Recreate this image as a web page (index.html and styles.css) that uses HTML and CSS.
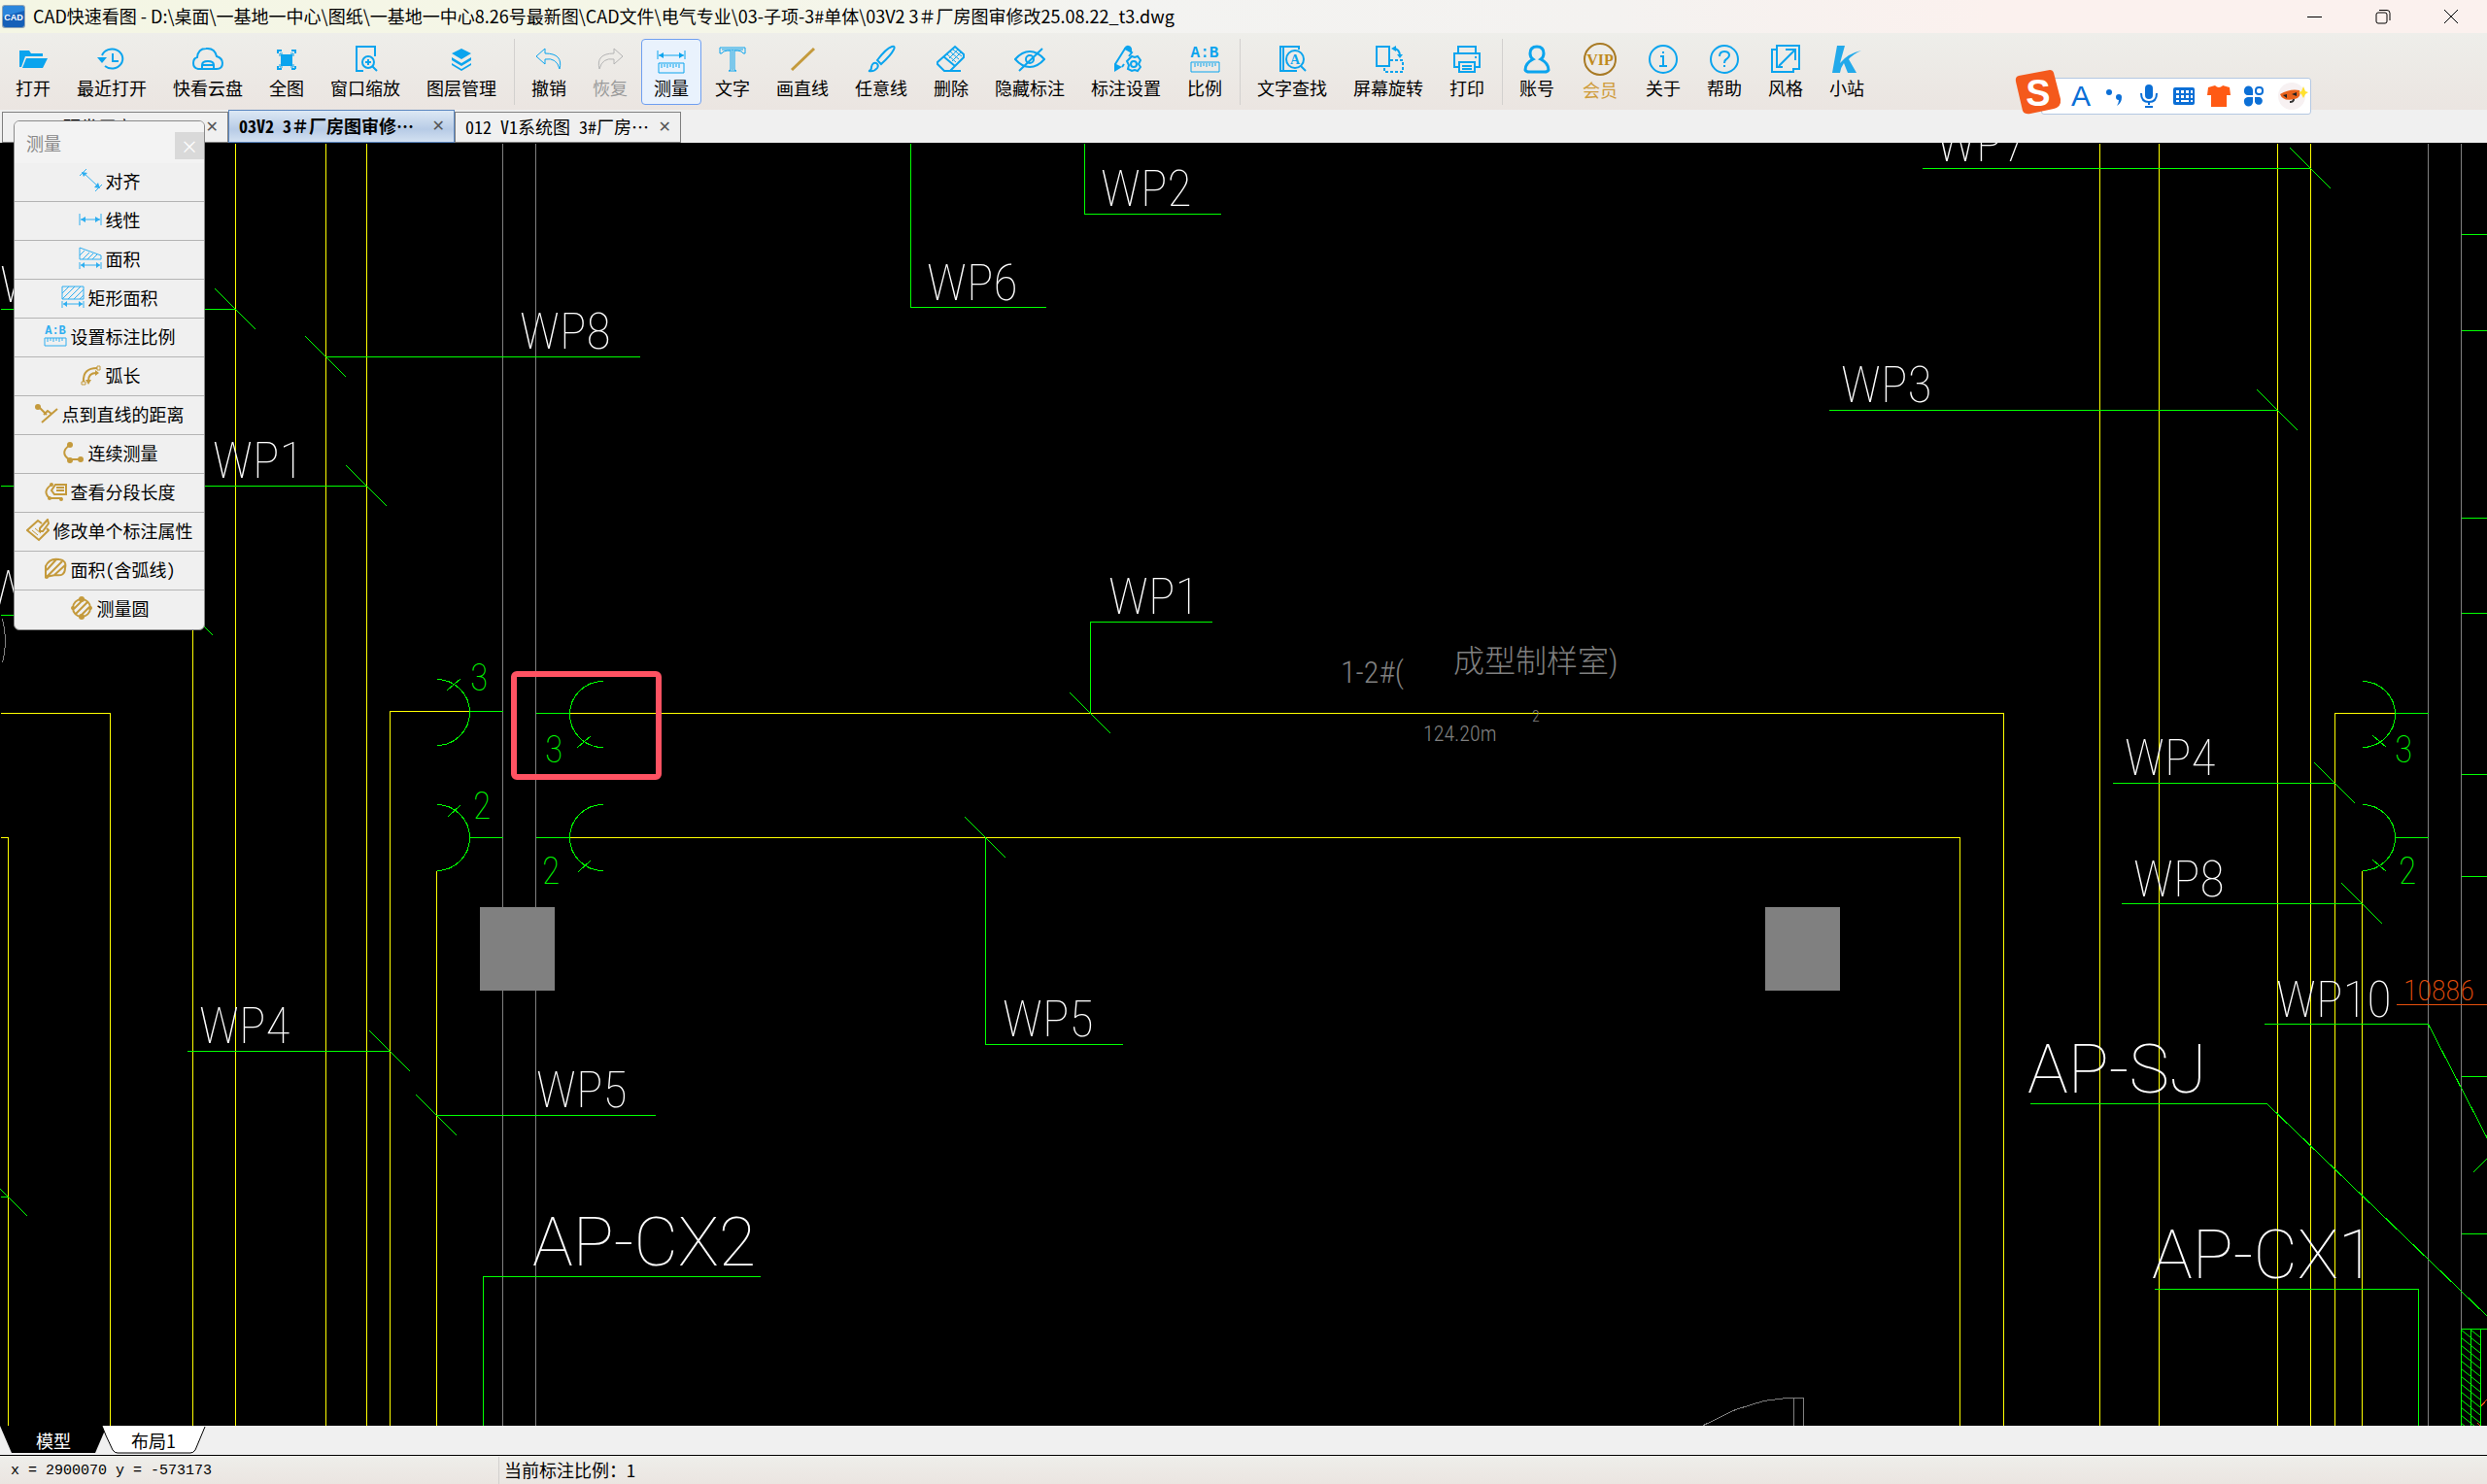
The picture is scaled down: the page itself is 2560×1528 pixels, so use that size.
FILE: index.html
```html
<!DOCTYPE html>
<html lang="zh-CN">
<head>
    <meta charset="UTF-8">
    <meta name="viewport" content="width=device-width, initial-scale=1.0">
    <title>CAD快速看图</title>
    <link rel="stylesheet" href="styles.css">
</head>
<body>
    <header class="titlebar">
        <svg class="app-icon" viewBox="0 0 24 24">
            <rect x="0" y="0" width="24" height="24" rx="3" fill="#8fa3b5"/>
            <rect x="1" y="1" width="22" height="22" rx="3" fill="#1560b8"/>
            <path d="M1 12 L23 6 V4 Q23 1 20 1 H4 Q1 1 1 4Z" fill="#2b86dc"/>
            <text x="12" y="16" class="app-icon-text">CAD</text>
        </svg>
        <h1>CAD快速看图 - D:\桌面\一基地一中心\图纸\一基地一中心8.26号最新图\CAD文件\电气专业\03-子项-3#单体\03V2 3＃厂房图审修改25.08.22_t3.dwg</h1>
        <div class="window-buttons">
            <button aria-label="最小化"><svg viewBox="0 0 16 16"><path d="M0 8.500H15"/></svg></button>
            <button aria-label="还原"><svg viewBox="0 0 16 16"><rect x="1" y="4" width="11" height="11" rx="2"/><path d="M4 1.500H12Q15 1.500 15 4.500V12"/></svg></button>
            <button aria-label="关闭"><svg viewBox="0 0 16 16"><path d="M1 1L15 15M15 1L1 15"/></svg></button>
        </div>
    </header>

    <nav class="toolbar">
        <button><svg viewBox="0 0 32 32"><path class="solid" d="M2 7H12L14 10H26V13H8L4 24H2ZM9 15H31L26 25H5Z"/></svg>打开</button>
        <button><svg viewBox="0 0 32 32"><path class="w2" d="M6 12A11 10 0 1 1 9 23M17 10V18H23"/><path class="solid" d="M1 14H11L6 20Z"/></svg>最近打开</button>
        <button><svg viewBox="0 0 32 32"><path class="w2" d="M10 26H6Q1 25 1 20Q1 15 5 14Q6 5 14 5Q23 4 25 13Q31 15 31 20Q31 26 25 26H22M10 26V22Q10 18 16 18Q22 18 22 22V26ZM10 22H22"/></svg>快看云盘</button>
        <button><svg viewBox="0 0 32 32"><rect class="solid" x="10" y="11" width="12" height="12"/><path d="M9 13V10H12M20 10H23V13M23 21V24H20M12 24H9V21"/><path class="w2" d="M7 10V7H11M21 7H25V10M25 23V26M7 23V26H11M21 26H25"/></svg>全图</button>
        <button><svg viewBox="0 0 32 32"><path class="w2" d="M14 28H7V3H26V13"/><circle class="w2" cx="19" cy="19" r="6"/><path class="w2" d="M23 23L28 28M16 19H22M19 16V22"/></svg>窗口缩放</button>
        <button><svg viewBox="0 0 32 32"><path class="solid" d="M16 5L26 10L16 16L6 10ZM6 14L16 20L26 14V17L16 23L6 17ZM6 20L16 26L26 20V22L16 28L6 22Z"/></svg>图层管理</button>
        <hr>
        <button><svg viewBox="0 0 32 32"><path d="M12 5L3 13L12 21V16Q24 14 27 26Q31 10 12 10Z"/></svg>撤销</button>
        <button class="disabled" disabled><svg viewBox="0 0 32 32"><path d="M20 5L29 13L20 21V16Q8 14 5 26Q1 10 20 10Z"/></svg>恢复</button>
        <button class="active"><svg viewBox="0 0 32 32"><path d="M2 7V16M30 7V16M3 12H29M3 20H29V30H3ZM6 21V25M9 21V24M12 21V25M15 21V24M18 21V25M21 21V24M24 21V25"/><path class="solid" d="M3 12L8 9V15ZM29 12L24 9V15Z"/></svg>测量</button>
        <button><svg viewBox="0 0 32 32"><path d="M3 4H29V10H27Q26 7 18 7V26Q18 28 20 28H12Q14 28 14 26V7Q6 7 5 10H3ZM5 6H27M16 6V27"/></svg>文字</button>
        <button><svg viewBox="0 0 32 32"><path class="gold-line" d="M5 27L28 5"/></svg>画直线</button>
        <button><svg viewBox="0 0 32 32"><path class="w2" d="M12 17Q21 5 27 3Q31 2 29 6Q26 12 16 21ZM3 28Q6 28 6 24Q7 19 11 20Q14 22 12 25Q9 29 3 28Z"/></svg>任意线</button>
        <button><svg viewBox="0 0 32 32"><path class="w2" d="M20 3L29 11V14L15 28H9L2 21V19ZM8 13L20 23M15 28H26"/><path d="M12 11L21 19M15 8L24 16M18 6L27 13M23 6L14 15M26 9L17 18"/></svg>删除</button>
        <button><svg viewBox="0 0 32 32"><path class="w2" d="M1 16Q8 8 16 8Q24 8 31 16Q24 24 16 24Q8 24 1 16ZM29 5L5 28"/><circle class="w2" cx="16" cy="16" r="4"/></svg>隐藏标注</button>
        <button><svg viewBox="0 0 32 32"><path class="w2" d="M5 21L15 5L22 9L19 13M12 24L14 21"/><path class="solid" d="M4 20L12 24L4 29ZM14 5Q16 1 19 2Q23 3 22 9Z"/><path class="w2" d="M22 13L25 14L28 13L31 17L29 21L31 24L28 28L25 27L22 28L18 26L19 22L17 18Z"/><circle class="w2" cx="24" cy="21" r="3"/></svg>标注设置</button>
        <button><svg viewBox="0 0 32 32"><text x="16" y="14" class="ab">A:B</text><path d="M2 19H31V29H2ZM6 20V24M9 20V23M12 20V24M15 20V23M18 20V24M21 20V23M24 20V24M27 20V23"/></svg>比例</button>
        <hr>
        <button><svg viewBox="0 0 32 32"><path class="w2" d="M23 6V3H4V28H21M7 3V28"/><circle class="w2" cx="19" cy="16" r="9"/><path class="w2" d="M25 23L30 28"/><text x="19" y="21" class="find-a">A</text></svg>文字查找</button>
        <button><svg viewBox="0 0 32 32"><path class="w2" d="M4 3H17V23H4Z"/><path class="w2 dash" d="M18 17H31V29H12V24"/><path class="w2" d="M21 5Q28 5 28 13"/><path class="solid" d="M24 2V8L19 5ZM25 11H31L28 15Z"/></svg>屏幕旋转</button>
        <button><svg viewBox="0 0 32 32"><path class="w2" d="M7 10V3H25V10M7 24H3V10H29V24H25M8 19H24V29H8ZM11 23H21M11 26H21"/><path class="w2" d="M24 14H26"/></svg>打印</button>
        <hr>
        <button><svg viewBox="0 0 32 32"><path class="w3" d="M16 3Q23 3 23 10Q23 14 20 16Q28 20 28 27Q27 29 24 29H8Q5 29 4 27Q4 20 12 16Q9 14 9 10Q9 3 16 3Z"/></svg>账号</button>
        <button class="vip"><svg viewBox="0 0 36 36"><circle cx="18" cy="18" r="16"/><text x="18" y="24">VIP</text></svg>会员</button>
        <button><svg viewBox="0 0 32 32"><circle class="w2" cx="16" cy="16" r="14"/><path class="w2" d="M13 13H16V23M12 23H20M15 9H17"/></svg>关于</button>
        <button><svg viewBox="0 0 32 32"><circle class="w2" cx="16" cy="16" r="14"/><path class="w2" d="M11 13Q11 8 16 8Q21 8 21 12Q21 14 18 16Q16 17 16 20M16 22V24"/></svg>帮助</button>
        <button><svg viewBox="0 0 32 32"><path class="w2" d="M7 8V2H30V26H24M24 25V29H2V6H7V24H13M9 23L25 7M16 6H26V17"/></svg>风格</button>
        <button><svg viewBox="0 0 32 32"><path class="k-logo" d="M6 2H14L9 20Q17 10 31 7Q22 11 18 16L26 30H17L13 20Q10 24 9 30H1Z"/></svg>小站</button>
    </nav>

    <div class="file-tabs">
        <div class="file-tab"><span class="first-name">3#研发厂房 02…</span><button aria-label="关闭">✕</button></div>
        <div class="file-tab current"><span>03V2 3＃厂房图审修…</span><button aria-label="关闭">✕</button></div>
        <div class="file-tab"><span>012 V1系统图 3#厂房…</span><button aria-label="关闭">✕</button></div>
    </div>

    <main class="drawing">
        <svg viewBox="0 147 2560 1321" preserveAspectRatio="xMinYMin slice">
            <defs>
                <pattern id="hatch" width="10" height="8" patternUnits="userSpaceOnUse" x="2533" y="1369">
                    <path d="M0 0L10 8" stroke="#00ff00" fill="none"/>
                </pattern>
            </defs>
            <g class="lines" transform="translate(.5 .5)">
                <!-- walls -->
                <path class="gray" d="M517 147V1468M551 147V1468M2499 147V1468M2533 147V1468"/>
                <path class="gray" d="M1753 1467L1786 1451L1815 1442L1839 1439H1856V1468M1846 1439V1468M2 637Q8 660 2 682"/>
                <!-- cables -->
                <path class="yellow" d="M198 147V1468M242 147V1468M335 147V1468M377 147V1468M0 734H113V1468M0 862H8V1468"/>
                <path class="yellow" d="M483 732H401V1468M449 896V1468M585 734H2062V1468M585 862H2017V1468"/>
                <path class="yellow" d="M2161 147V1468M2222 147V1468M2344 147V1468M2378 147V1468M2465 734H2403V1468M2431 896V1468"/>
                <!-- leaders -->
                <path class="green" d="M0 318H242M221 297L263 339M335 367H658M314 346L356 388M0 500H377M356 479L398 521M0 633H198M177 612L219 654"/>
                <path class="green" d="M192 1082H401M380 1061L422 1103M449 1148H674M428 1127L470 1169M0 1232H8M0 1224L28 1252M782 1314H497V1468"/>
                <path class="green" d="M937 147V316H1076M1116 147V220H1256M1247 640H1122V734M1101 713L1143 755M1014 862V1075H1155M993 841L1035 883"/>
                <path class="green" d="M1978 173H2378M2357 152L2399 194M1882 422H2344M2323 401L2365 443M2174 806H2403M2382 785L2424 827M2183 930H2431M2410 909L2452 951"/>
                <path class="green" d="M2330 1054H2499L2560 1172M2089 1136H2333L2560 1355M2217 1327H2489V1468M2545 1207L2560 1192"/>
                <path class="green" d="M2533 241H2560M2533 340H2560M2533 533H2560M2533 631H2560M2533 797H2560M2533 902H2560M2533 1108H2560M2533 1270H2560"/>
                <!-- sockets -->
                <path class="green" d="M449 699A34 34 0 0 1 449 767M483 732H517M460 710L474 698M449 828A34 34 0 0 1 449 896M483 862H517M461 840L474 828"/>
                <path class="green" d="M620 701A34 34 0 0 0 620 769M551 734H585M594 769L608 757M620 828A34 34 0 0 0 620 896M551 862H585M595 897L608 885"/>
                <path class="green" d="M2431 701A34 34 0 0 1 2431 769M2465 734H2499M2442 757L2456 769M2431 828A34 34 0 0 1 2431 896M2465 862H2499M2442 885L2456 897"/>
                <path class="orange" d="M2466 1034H2560M2552 1449L2560 1440M2550 1465L2553 1468"/>
                <path class="green" d="M2533 1368H2560M2533 1368V1468M2543 1368V1468M2553 1368V1468"/>
            </g>
            <rect x="2533" y="1369" width="20" height="99" fill="url(#hatch)"/>
            <rect class="column" x="494" y="934" width="77" height="86"/>
            <rect class="column" x="1817" y="934" width="77" height="86"/>

            <g class="mark">
                <text x="1133" y="212">WP2</text>
                <text x="954" y="309">WP6</text>
                <text x="535" y="359">WP8</text>
                <text x="219" y="492">WP1</text>
                <text x="1141" y="632">WP1</text>
                <text x="1993" y="166">WP7</text>
                <text x="1895" y="414">WP3</text>
                <text x="2187" y="798">WP4</text>
                <text x="2196" y="923">WP8</text>
                <text x="2343" y="1047">WP10</text>
                <text x="205" y="1074">WP4</text>
                <text x="552" y="1140">WP5</text>
                <text x="1032" y="1067">WP5</text>
                <text x="0" y="311">WP4</text>
                <text x="-12" y="624">WP5</text>
            </g>
            <g class="panel-name">
                <text x="548" y="1303">AP-CX2</text>
                <text x="2087" y="1125">AP-SJ</text>
                <text x="2215" y="1316">AP-CX1</text>
            </g>
            <g class="wires">
                <text x="484" y="711">3</text>
                <text x="487" y="843">2</text>
                <text x="561" y="785">3</text>
                <text x="558" y="910">2</text>
                <text x="2465" y="785">3</text>
                <text x="2469" y="910">2</text>
            </g>
            <g class="room">
                <text x="1380" y="703">1-2#(</text>
                <text x="1496" y="692">成型制样室)</text>
                <text class="room-area" x="1465" y="763">124.20m</text>
                <text class="room-power" x="1577" y="743">2</text>
            </g>
            <text class="dimension" x="2474" y="1030">10886</text>
            <rect class="highlight" x="529" y="694" width="149" height="106" rx="3"/>
        </svg>
    </main>

    <footer>
        <div class="sheet-tabs">
            <button class="model"><svg viewBox="0 0 110 30"><path d="M0 0H110L98 28H12Z"/></svg><span>模型</span></button>
            <button class="layout"><svg viewBox="0 0 108 30"><path d="M1 0L5 10L12 25Q14 28 17 28H92Q95 28 97 25L107 1"/></svg><span>布局1</span></button>
        </div>
        <div class="statusbar">
            <span class="coords">x = 2900070 y = -573173</span>
            <span class="scale">当前标注比例：1</span>
        </div>
    </footer>

    <aside class="measure">
        <div class="measure-title"><span>测量</span><button aria-label="关闭">×</button></div>
        <button><svg viewBox="0 0 24 24"><path d="M1 7L8 0M17 23L24 16M5 4L20 18"/><path class="solid" d="M3 3L9 4L5 8ZM22 20L16 19L20 14Z"/></svg>对齐</button>
        <button><svg viewBox="0 0 24 24"><path d="M1 6V18M23 6V18M2 12H22"/><path class="solid" d="M2 12L7 9V15ZM22 12L17 9V15Z"/></svg>线性</button>
        <button><svg viewBox="0 0 24 24"><path d="M1 1L23 9V13H1ZM1 9L6 4M4 13L11 6M9 13L15 7M14 13L19 8M1 16V23M23 16V23M2 19H22"/><path class="solid" d="M2 19L6 16V22ZM22 19L18 16V22Z"/></svg>面积</button>
        <button><svg viewBox="0 0 24 24"><path d="M1 1H23V14H1ZM1 8L8 1M1 14L14 1M7 14L20 1M13 14L23 4M19 14L23 10M1 16V23M23 16V23M2 19H22"/><path class="solid" d="M2 19L6 16V22ZM22 19L18 16V22Z"/></svg>矩形面积</button>
        <button><svg viewBox="0 0 24 24"><text x="12" y="10" class="ab-small">A:B</text><path d="M1 14H23V22H1ZM4 14V18M7 14V17M10 14V18M13 14V17M16 14V18M19 14V17"/></svg>设置标注比例</button>
        <button class="gold"><svg viewBox="0 0 24 24"><path class="w2" d="M5 19Q4 5 19 5M10 18Q10 10 18 10"/><path d="M3 19H7V22H3ZM19 3H22V7H19Z"/><path class="solid" d="M7 17H13L10 22ZM17 7V13L21 10Z"/></svg>弧长</button>
        <button class="gold"><svg viewBox="0 0 24 24"><path class="w2" d="M4 5L12 13M7 21L23 7M9 13L13 9L17 12"/><circle class="solid" cx="3" cy="5" r="3"/></svg>点到直线的距离</button>
        <button class="gold"><svg viewBox="0 0 24 24"><path class="w2" d="M9 4Q-2 12 8 19H20"/><circle class="solid" cx="9" cy="4" r="3"/><circle class="solid" cx="9" cy="20" r="3"/><circle class="solid" cx="20" cy="19" r="3"/></svg>连续测量</button>
        <button class="gold"><svg viewBox="0 0 24 24"><path class="w2" d="M8 5Q-2 12 6 19H19M12 5H23V15H11L8 11ZM13 8H21M13 11H21"/><circle class="solid" cx="8" cy="5" r="2"/><circle class="solid" cx="6" cy="19" r="2"/><circle class="solid" cx="18" cy="20" r="2"/></svg>查看分段长度</button>
        <button class="gold"><svg viewBox="0 0 24 24"><path class="w2" d="M16 5L12 2L1 12L13 22L23 12L21 10"/><path d="M6 12L12 17M9 10L15 15"/><path class="w2" d="M22 1L14 10V13H17L23 5Z"/></svg>修改单个标注属性</button>
        <button class="gold"><svg viewBox="0 0 24 24"><path class="w2" d="M2 20V9Q6 0 16 2Q24 3 22 11Q22 20 12 18ZM3 13L13 2M3 20L19 4M11 18L22 8"/><circle class="solid" cx="3" cy="20" r="2"/></svg>面积(含弧线)</button>
        <button class="gold"><svg viewBox="0 0 24 24"><circle class="w2" cx="12" cy="12" r="9"/><path class="w2" d="M4 13L13 4M6 18L18 6M11 20L20 11"/><circle class="solid" cx="12" cy="3" r="3"/><circle class="solid" cx="12" cy="21" r="3"/><circle class="solid" cx="3" cy="12" r="2"/><circle class="solid" cx="21" cy="12" r="2"/></svg>测量圆</button>
    </aside>

    <aside class="ime">
        <svg class="ime-logo" viewBox="0 0 48 46">
            <path d="M4 6L36 0Q39 0 40 3L47 30Q48 38 40 40L16 45Q10 46 8 42L1 12Q0 7 4 6Z" fill="#f4591c"/>
            <text x="24" y="37">S</text>
        </svg>
        <div class="ime-bar">
            <span class="ime-a">A</span>
            <svg viewBox="0 0 24 24"><circle cx="7" cy="8" r="3"/><path d="M14 13A3 3 0 0 1 20 13Q20 19 15 22Q17 19 17 16Q14 16 14 13Z"/></svg>
            <svg viewBox="0 0 24 24"><rect x="8" y="0" width="8" height="15" rx="4"/><path d="M4 9Q4 18 12 18Q20 18 20 9" fill="none" stroke="#0b6fd6" stroke-width="2"/><path d="M11 18H13V21H11ZM8 22H16V24H8Z"/></svg>
            <svg viewBox="0 0 24 24"><rect x="1" y="3" width="22" height="18" rx="2"/><path d="M4 6H7V9H4ZM9 6H12V9H9ZM14 6H17V9H14ZM19 6H21V9H19ZM4 11H7V14H4ZM9 11H12V14H9ZM14 11H17V14H14ZM19 11H21V14H19ZM4 16H7V18H4ZM9 16H17V18H9ZM19 16H21V18H19Z" fill="#fff"/></svg>
            <svg viewBox="0 0 24 24"><path d="M1 3L8 1Q12 5 16 1L23 3L24 11H20V23H4V11H0Z" fill="#ff5a14"/></svg>
            <svg viewBox="0 0 24 24"><path d="M2 6A4 4 0 0 1 11 6V11H6A4 4 0 0 1 2 6ZM2 18A4 4 0 0 1 6 13H11V18A4 4 0 0 1 2 18ZM13 13H18A4 4 0 1 1 13 18Z"/><rect x="14" y="3" width="7" height="7" rx="3" fill="none" stroke="#0b6fd6" stroke-width="2"/></svg>
            <svg class="ime-face" viewBox="0 0 32 32"><circle cx="15" cy="16" r="14" fill="#f7f1f2"/><path d="M3 14Q13 8 23 10Q25 18 18 19Q6 22 3 14Z" fill="#e8621c"/><path d="M6 15L10 14V18ZM15 14L20 12V16Z" fill="#222"/><path d="M13 22Q17 22 17 19" fill="none" stroke="#333" stroke-width="2"/><path d="M27 6L29 11L32 12L29 14L27 18L25 14L22 12L25 11Z" fill="#ffe12e"/></svg>
        </div>
    </aside>
</body>
</html>
```
FILE: styles.css
```css
* {
    box-sizing: border-box;
}
body {
    margin: 0;
    height: 100vh;
    display: flex;
    flex-direction: column;
    overflow: hidden;
    position: relative;
    background-color: #f0f0f0;
    color: #000;
    font-family: 'Noto Sans Mono CJK SC', 'Noto Sans CJK SC', sans-serif;
    font-size: 18px;
}
button {
    font: inherit;
    color: inherit;
    background: none;
    border: 0;
    padding: 0;
    cursor: pointer;
}

/* title bar */
.titlebar {
    display: flex;
    align-items: center;
    height: 34px;
    padding: 0 2px;
    background: linear-gradient(to right, #f4f6e4, #f5f6e8 30%, #f3f3f1 45%, #f4f2f0 65%, #fbf1ee 80%);
}
.app-icon {
    width: 24px;
    height: 24px;
    margin-right: 8px;
}
.app-icon-text {
    font: bold 9px 'Liberation Sans', sans-serif;
    fill: #fff;
    text-anchor: middle;
}
.titlebar h1 {
    flex: 1;
    margin: 0;
    padding-bottom: 2px;
    font: 18px 'Noto Sans CJK SC', sans-serif;
    white-space: nowrap;
}
.window-buttons {
    display: flex;
    height: 34px;
}
.window-buttons button {
    width: 70px;
    display: flex;
    align-items: center;
    justify-content: center;
}
.window-buttons svg {
    width: 16px;
    height: 16px;
    fill: none;
    stroke: #000;
}

/* toolbar */
.toolbar {
    display: flex;
    align-items: center;
    gap: 1px;
    height: 79px;
    padding-left: 3px;
    background: linear-gradient(#eeeeea, #ebe5e1);
}
.toolbar button {
    display: flex;
    flex-direction: column;
    align-items: center;
    height: 68px;
    padding: 4px 12px 0;
    border: 1px solid transparent;
    border-radius: 4px;
    line-height: 26px;
    white-space: nowrap;
}
.toolbar button.active {
    background-color: #e9f2fd;
    border-color: #6f9ff0;
}
.toolbar button.disabled {
    color: #9a9a9a;
}
.toolbar hr {
    width: 1px;
    height: 68px;
    margin: 0 3px;
    border: 0;
    background-color: #d2d0ce;
}
.toolbar button + hr {
    margin-left: 4px;
}
.toolbar svg {
    width: 32px;
    height: 32px;
    fill: none;
    stroke: #0ba4ee;
}
.toolbar .disabled svg {
    stroke: #b4b4b4;
}
.w2 {
    stroke-width: 2;
}
.w3 {
    stroke-width: 3;
}
.dash {
    stroke-dasharray: 3 2;
}
.toolbar .solid {
    fill: #0ba4ee;
    stroke: none;
}
.toolbar .gold-line {
    stroke: #c49a3c;
    stroke-width: 3;
}
.toolbar svg text {
    stroke: none;
    fill: #0ba4ee;
    text-anchor: middle;
}
.toolbar .ab {
    font: bold 16px 'Liberation Mono', monospace;
}
.toolbar .find-a {
    font: bold 14px 'Liberation Serif', serif;
}
.toolbar .k-logo {
    fill: #22a9ea;
    stroke: none;
}
.toolbar .vip {
    color: #cf9c3c;
    padding: 2px 14px 0;
}
.toolbar .vip svg {
    width: 36px;
    height: 36px;
    stroke: #a87a24;
    stroke-width: 2;
}
.toolbar .vip text {
    font: bold 16px 'Liberation Serif', serif;
    fill: #c08a1c;
}

/* open files */
.file-tabs {
    display: flex;
    align-items: flex-end;
    height: 34px;
    padding-left: 2px;
}
.file-tab {
    display: flex;
    align-items: center;
    justify-content: space-between;
    width: 233px;
    height: 32px;
    padding: 0 9px 2px 10px;
    border: 1px solid #7f7f7f;
    background-color: #f0f0f0;
    white-space: nowrap;
}
.file-tab.current {
    height: 34px;
    border-color: #5a86c0;
    background: linear-gradient(#dde8f4, #b7cbe6 60%, #d3e1f1);
    font-weight: bold;
}
.file-tab button {
    font: 16px 'DejaVu Sans', sans-serif;
    color: #555;
}
.first-name {
    padding-left: 34px;
}

/* drawing area */
.drawing {
    flex: 1;
    min-height: 0;
    background-color: #000;
}
.drawing svg {
    display: block;
    width: 100%;
    height: 100%;
}
.lines {
    fill: none;
    shape-rendering: crispEdges;
}
.gray {
    stroke: #808080;
}
.yellow {
    stroke: #ffff00;
}
.green {
    stroke: #00ff00;
}
.orange {
    stroke: #e8500c;
}
.column {
    fill: #808080;
}
.highlight {
    fill: none;
    stroke: #ff5262;
    stroke-width: 6;
}
.mark {
    fill: #fff;
    font: 100 52px 'Roboto Condensed', Roboto, sans-serif;
}
.panel-name {
    fill: #fff;
    font: 100 70px Roboto, sans-serif;
}
.wires {
    fill: #00ff00;
    font: 100 38px 'Roboto Condensed', Roboto, sans-serif;
}
.room {
    fill: #808080;
    font: 300 32px 'Roboto Condensed', 'Noto Sans CJK SC', sans-serif;
}
.room-area {
    font-size: 22px;
}
.room-power {
    font-size: 16px;
}
.dimension {
    fill: #e8500c;
    font: 200 30px 'Roboto Condensed', Roboto, sans-serif;
}

/* sheets and status */
.sheet-tabs {
    display: flex;
    height: 30px;
    background-color: #f0f0f0;
    font-family: 'Noto Sans CJK SC', sans-serif;
}
.sheet-tabs button {
    display: grid;
    align-items: center;
    justify-items: center;
}
.sheet-tabs svg, .sheet-tabs span {
    grid-area: 1 / 1;
}
.sheet-tabs svg {
    height: 30px;
}
.sheet-tabs .model {
    color: #fff;
}
.sheet-tabs .model svg {
    width: 110px;
}
.sheet-tabs .layout svg {
    width: 108px;
    fill: #fff;
    stroke: #000;
}
.sheet-tabs .layout {
    margin-left: -6px;
}
.statusbar {
    display: flex;
    align-items: center;
    height: 30px;
    border-top: 1px solid #000;
    background: linear-gradient(#eeeeea, #ebe5e1);
}
.coords {
    width: 513px;
    padding: 2px 0 0 11px;
    font: 15px 'Liberation Mono', monospace;
}
.scale {
    padding: 0 0 2px 5px;
    border-left: 1px solid #d2d0ce;
    line-height: 26px;
}

/* floating measure window */
.measure {
    position: absolute;
    left: 14px;
    top: 124px;
    width: 197px;
    border: 1px solid #8a8a8a;
    border-radius: 6px;
    background-color: #f0f0f0;
    overflow: hidden;
}
.measure-title {
    display: flex;
    align-items: center;
    justify-content: space-between;
    height: 43px;
    padding-left: 12px;
    background-color: #f3f3f3;
    color: #888;
    font-family: 'Noto Sans CJK SC', sans-serif;
}
.measure-title button {
    width: 30px;
    height: 28px;
    margin-top: 6px;
    background-color: #d9d9d9;
    color: #fff;
    line-height: 26px;
}
.measure > button {
    display: flex;
    align-items: center;
    justify-content: center;
    gap: 4px;
    width: 100%;
    height: 40px;
    padding-bottom: 4px;
    border-bottom: 1px solid #b4b4b4;
}
.measure > button:last-child {
    border-bottom: 0;
}
.measure svg {
    width: 24px;
    height: 24px;
    fill: none;
    stroke: #2eaef0;
}
.measure .solid {
    fill: #2eaef0;
    stroke: none;
}
.measure .gold svg {
    stroke: #c49a3c;
}
.measure .gold .solid {
    fill: #c49a3c;
}
.ab-small {
    font: bold 12px 'Liberation Mono', monospace;
    fill: #2eaef0;
    stroke: none;
    text-anchor: middle;
}

/* input method bar */
.ime {
    position: absolute;
    right: 181px;
    top: 72px;
    display: flex;
    align-items: flex-end;
}
.ime-logo {
    width: 48px;
    height: 46px;
    margin-right: -21px;
    z-index: 1;
}
.ime-logo text {
    font: bold 38px 'Liberation Sans', sans-serif;
    fill: #fff;
    text-anchor: middle;
}
.ime-bar {
    display: flex;
    align-items: center;
    gap: 12px;
    height: 38px;
    padding: 0 2px 0 30px;
    border: 1px solid #b4c8e2;
    border-radius: 3px;
    background-color: #fff;
}
.ime-bar svg {
    width: 24px;
    height: 24px;
    fill: #0b6fd6;
}
.ime-bar .ime-face {
    width: 32px;
    height: 32px;
}
.ime-a {
    color: #0b6fd6;
    font: 30px 'Liberation Sans', sans-serif;
}
```
